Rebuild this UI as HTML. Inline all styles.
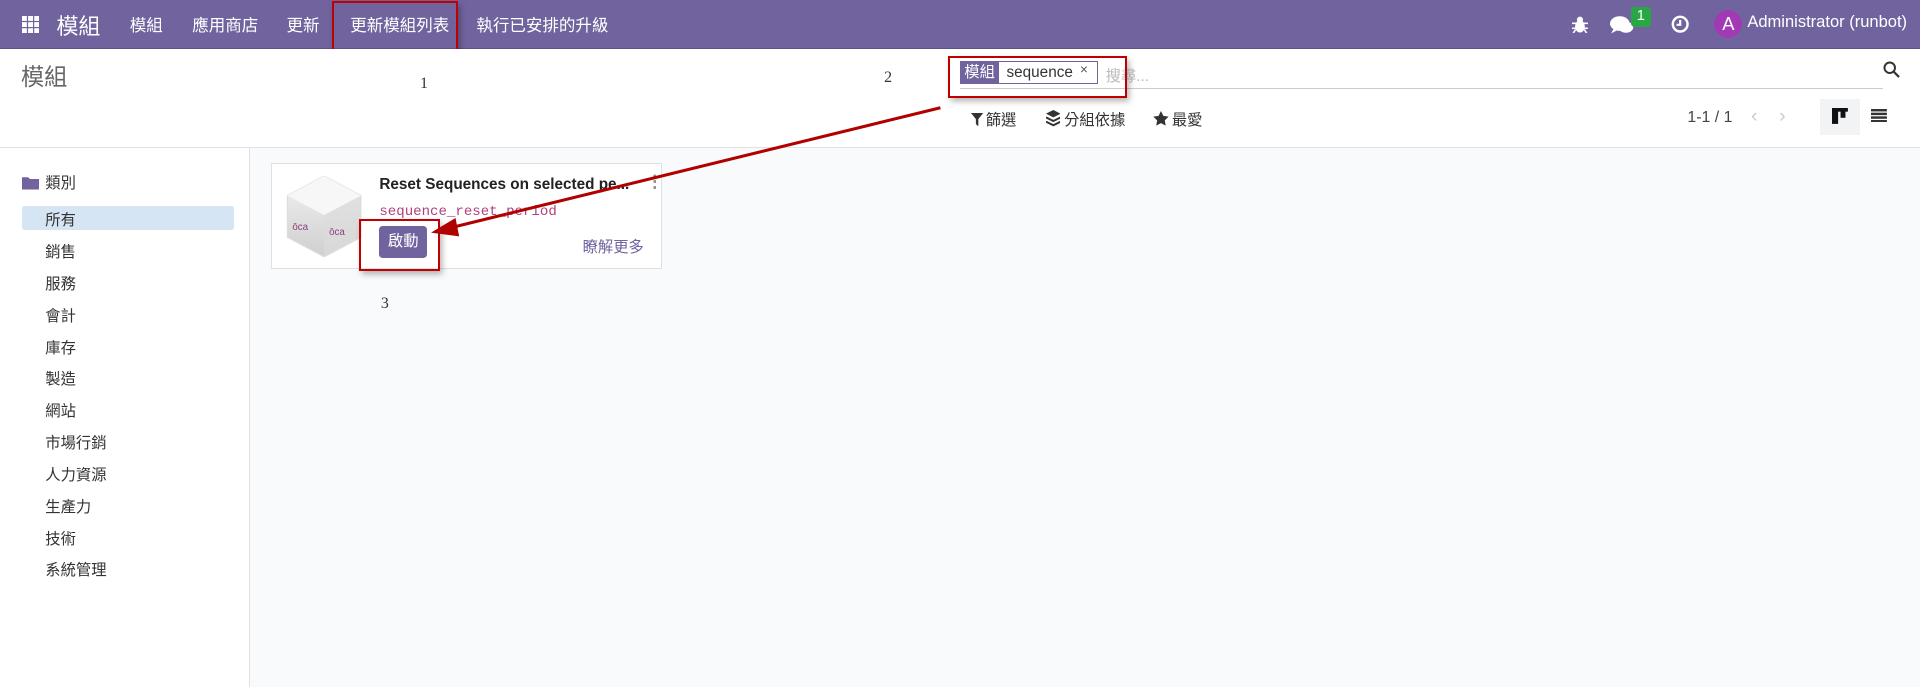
<!DOCTYPE html>
<html><head><meta charset="utf-8"><style>
*{box-sizing:border-box;margin:0;padding:0}
html,body{width:1920px;height:687px;overflow:hidden;background:#f9fafb}
#w{zoom:1.22449;width:1568px;height:561px;position:relative;font-family:"Liberation Sans","Noto Sans CJK TC",sans-serif;color:#4c4c4c;font-size:13px}
.a{position:absolute;white-space:nowrap}
#nav{position:absolute;left:0;top:0;width:1568px;height:40px;background:#71639e;border-bottom:1px solid #5e5289}
#nav .a{color:#fff;font-size:13.5px;top:10px}
#cp{position:absolute;left:0;top:40px;width:1568px;height:81px;background:#fff;border-bottom:1px solid #dee2e6}
#sb{position:absolute;left:0;top:121px;width:204px;height:440px;background:#fff;border-right:1px solid #dee2e6}
.si{position:absolute;left:37px;font-size:12.5px;color:#333}
.red{position:absolute;border:2px solid #c00000;box-shadow:2px 3px 5px rgba(0,0,0,.3)}
</style></head><body><div id="w">
<div id="nav">
 <svg class="a" style="left:18px;top:13px" width="14" height="14" viewBox="0 0 14 14" fill="#fff"><rect x="0" y="0" width="4" height="4"/><rect x="5" y="0" width="4" height="4"/><rect x="10" y="0" width="4" height="4"/><rect x="0" y="5" width="4" height="4"/><rect x="5" y="5" width="4" height="4"/><rect x="10" y="5" width="4" height="4"/><rect x="0" y="10" width="4" height="4"/><rect x="5" y="10" width="4" height="4"/><rect x="10" y="10" width="4" height="4"/></svg>
 <div class="a" style="left:46px;top:7px!important;font-size:18px!important">模組</div>
 <div class="a" style="left:106px">模組</div>
 <div class="a" style="left:157px">應用商店</div>
 <div class="a" style="left:234px">更新</div>
 <div class="a" style="left:286px">更新模組列表</div>
 <div class="a" style="left:389px">執行已安排的升級</div>
 <svg class="a" style="left:1284px;top:13px" width="13" height="14" viewBox="0 0 13 14" fill="#fff"><ellipse cx="6.5" cy="8.5" rx="4" ry="5"/><circle cx="6.5" cy="3" r="2.5"/><path d="M0 6h13M0 10h13M1 14l2-3M12 14l-2-3" stroke="#fff" stroke-width="1.3"/></svg>
 <svg class="a" style="left:1315px;top:12px" width="20" height="16" viewBox="0 0 20 16" fill="#fff"><ellipse cx="8" cy="7" rx="8" ry="6"/><path d="M3 11l-2 4 6-3z"/><ellipse cx="13" cy="10" rx="6" ry="4.5"/></svg>
 <div class="a" style="left:1332px;top:6px!important;width:16px;height:16px;background:#28a745;border-radius:3px;font-size:12px!important;text-align:center;line-height:16px">1</div>
 <svg class="a" style="left:1365px;top:12px" width="15" height="15" viewBox="0 0 15 15"><circle cx="7.5" cy="7.5" r="6" fill="none" stroke="#fff" stroke-width="2"/><path d="M7.5 4v4h-3" stroke="#fff" stroke-width="1.8" fill="none"/></svg>
 <div class="a" style="left:1400px;top:8px!important;width:23px;height:23px;border-radius:50%;background:#a33ab5;text-align:center;line-height:23px;font-size:15px!important">A</div>
 <div class="a" style="left:1427px">Administrator (runbot)</div>
</div>
<div class="red" style="left:271px;top:1px;width:103px;height:42px"></div>
<div id="cp">
 <div class="a" style="left:17px;top:7px;font-size:19px;color:#666">模組</div>
 <div class="a" style="left:343px;top:21px;font-size:13px;color:#333;font-family:'Liberation Serif',serif">1</div>
 <div class="a" style="left:722px;top:16px;font-size:13px;color:#333;font-family:'Liberation Serif',serif">2</div>
 <div class="a" style="left:784px;top:32px;width:754px;height:1px;background:#ccc"></div>
 <div class="a" style="left:784px;top:10px;height:19px;width:113px;border:1px solid #71639e;background:#fff"></div>
 <div class="a" style="left:784px;top:10px;width:32px;height:19px;background:#71639e;color:#fff;font-size:12.5px;line-height:19px;text-align:center">模組</div>
 <div class="a" style="left:822px;top:12px;color:#333;font-size:12.5px">sequence</div>
 <div class="a" style="left:882px;top:11px;color:#555;font-size:11px">×</div>
 <div class="a" style="left:903px;top:12px;color:#bbb;font-size:12.5px">搜尋...</div>
 <svg class="a" style="left:1538px;top:10px" width="14" height="14" viewBox="0 0 14 14"><circle cx="5.5" cy="5.5" r="4.3" stroke="#333" stroke-width="1.6" fill="none"/><path d="M8.6 8.6l4.5 4.5" stroke="#333" stroke-width="1.8"/></svg>
 <svg class="a" style="left:793px;top:52px" width="10" height="11" viewBox="0 0 10 11"><path d="M0 0h10L6 5v6L4 9V5z" fill="#333"/></svg>
 <div class="a" style="left:805px;top:48px;color:#333;font-size:12.5px">篩選</div>
 <svg class="a" style="left:854px;top:50px" width="12" height="14" viewBox="0 0 12 14"><path d="M6 0l6 3-6 3-6-3z" fill="#333"/><path d="M0 6l6 3 6-3M0 9.5l6 3 6-3" stroke="#333" stroke-width="1.6" fill="none"/></svg>
 <div class="a" style="left:869px;top:48px;color:#333;font-size:12.5px">分組依據</div>
 <svg class="a" style="left:942px;top:51px" width="13" height="12" viewBox="0 0 24 23"><path d="M12 0l3.7 7.6 8.3 1.2-6 5.8 1.4 8.3L12 19l-7.4 3.9L6 14.6 0 8.8l8.3-1.2z" fill="#333"/></svg>
 <div class="a" style="left:957px;top:48px;color:#333;font-size:12.5px">最愛</div>
 <div class="a" style="left:1378px;top:49px;color:#444">1-1 / 1</div>
 <div class="a" style="left:1430px;top:46px;color:#ccc;font-size:16px">‹</div>
 <div class="a" style="left:1453px;top:46px;color:#ccc;font-size:16px">›</div>
 <div class="a" style="left:1486px;top:41px;width:33px;height:29px;background:#f2f3f5"></div>
 <svg class="a" style="left:1496px;top:48px" width="13" height="13" viewBox="0 0 13 13"><rect x="0" y="0" width="13" height="3" fill="#111"/><rect x="0" y="0" width="5" height="13" fill="#111"/><rect x="7" y="0" width="4" height="8" fill="#111"/></svg>
 <svg class="a" style="left:1528px;top:49px" width="13" height="11" viewBox="0 0 13 11" fill="#333"><rect y="0" width="13" height="2"/><rect y="3" width="13" height="2"/><rect y="6" width="13" height="2"/><rect y="9" width="13" height="2"/></svg>
</div>
<div class="red" style="left:774px;top:46px;width:146px;height:34px"></div>
<div id="sb">
 <svg class="a" style="left:18px;top:23px" width="14" height="11" viewBox="0 0 14 11"><path d="M0 1h5l1.5 1.5H14V11H0z" fill="#71639e"/></svg>
 <div class="si" style="top:19px">類別</div>
 <div class="a" style="left:18px;top:47px;width:173px;height:20px;background:#d5e5f4;border-radius:2px"></div>
 <div class="si" style="top:49px">所有</div>
 <div class="si" style="top:75px">銷售</div>
 <div class="si" style="top:101px">服務</div>
 <div class="si" style="top:127px">會計</div>
 <div class="si" style="top:153px">庫存</div>
 <div class="si" style="top:179px">製造</div>
 <div class="si" style="top:205px">網站</div>
 <div class="si" style="top:231px">市場行銷</div>
 <div class="si" style="top:257px">人力資源</div>
 <div class="si" style="top:283px">生產力</div>
 <div class="si" style="top:309px">技術</div>
 <div class="si" style="top:335px">系統管理</div>
</div>
<div class="a" style="left:221px;top:133px;width:320px;height:87px;background:#fff;border:1px solid #dee2e6">
 <svg class="a" style="left:11px;top:10px" width="64" height="66" viewBox="0 0 64 66"><defs><linearGradient id="g" x1="0" y1="0" x2="0" y2="1"><stop offset="0" stop-color="#f2f2f2"/><stop offset="1" stop-color="#cfcfcf"/></linearGradient></defs><path d="M32 0L62 16V50L32 66L2 50V16z" fill="url(#g)" stroke="#ddd"/><path d="M32 0L62 16L32 32L2 16z" fill="#f7f7f7"/><path d="M32 32V66L62 50V16z" fill="#dcdcdc" opacity=".7"/><text x="6" y="44" font-size="8" fill="#8a3d7a" font-family="Liberation Sans">ōca</text><text x="36" y="48" font-size="8" fill="#8a3d7a" font-family="Liberation Sans">ōca</text></svg>
 <div class="a" style="left:88px;top:10px;font-weight:bold;color:#222;font-size:12.5px">Reset Sequences on selected pe...</div>
 <div class="a" style="left:306px;top:6px;color:#888;font-size:14px;font-weight:bold">⋮</div>
 <div class="a" style="left:88px;top:33px;color:#b0407e;font-family:'Liberation Mono',monospace;font-size:11.5px">sequence_reset_period</div>
 <div class="a" style="left:88px;top:51px;width:39px;height:26px;background:#71639e;color:#fff;border-radius:3px;text-align:center;line-height:26px;font-size:12.5px">啟動</div>
 <div class="a" style="left:254px;top:58px;color:#71639e;font-size:12.5px">瞭解更多</div>
</div>
<div class="red" style="left:293px;top:179px;width:66px;height:42px"></div>
<div class="a" style="left:311px;top:241px;font-size:13px;color:#333;font-family:'Liberation Serif',serif">3</div>
<svg class="a" style="left:0;top:0" width="1568" height="561"><line x1="768" y1="88" x2="368" y2="186" stroke="#b00000" stroke-width="2.5"/><path d="M352 190L372 178L375 193z" fill="#b00000"/></svg>
</div></body></html>
